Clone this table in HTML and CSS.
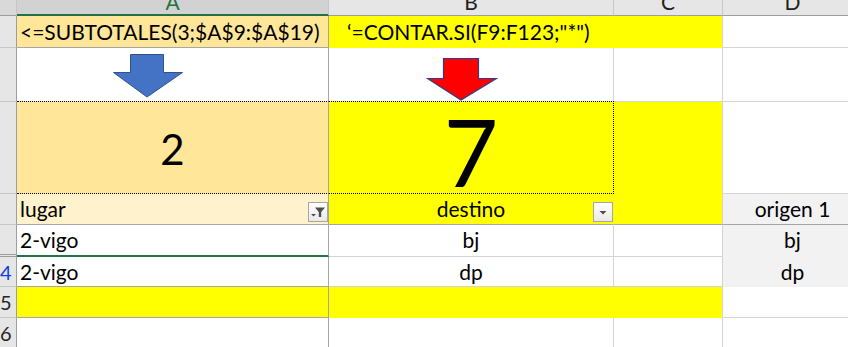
FILE: index.html
```html
<!DOCTYPE html>
<html lang="es">
<head>
    <meta charset="UTF-8">
    <meta name="viewport" content="width=device-width, initial-scale=1.0">
    <title>Hoja de cálculo - filtros</title>
    <link rel="stylesheet" href="styles.css">
</head>
<body>
    <div class="sheet">
        <!-- column headers -->
        <div class="hd corner"></div>
        <div class="hd col-sel">A</div>
        <div class="hd">B</div>
        <div class="hd">C</div>
        <div class="hd">D</div>

        <!-- formulas -->
        <div class="rh"></div>
        <div class="cell col-a peach formula">&lt;=SUBTOTALES(3;$A$9:$A$19)</div>
        <div class="cell yellow formula formula-b no-right">‘=CONTAR.SI(F9:F123;"*")</div>
        <div class="cell yellow"></div>
        <div class="cell"></div>

        <!-- arrows -->
        <div class="rh"></div>
        <div class="cell col-a arrow-cell">
            <svg class="arrow arrow-blue" width="72" height="44" viewBox="0 0 72 44">
                <polygon points="18.5,0.5 51.5,0.5 51.5,18.5 70.5,18.5 35,43 1.5,18.5 18.5,18.5" fill="#4472c4" stroke="#2f528f" stroke-width="1"/>
            </svg>
        </div>
        <div class="cell arrow-cell no-bottom">
            <svg class="arrow arrow-red" width="72" height="43" viewBox="0 0 72 43">
                <polygon points="17.5,0.5 52.5,0.5 52.5,20.5 70.5,20.5 35,42 1.5,20.5 17.5,20.5" fill="#ff0000" stroke="#2f3c8f" stroke-width="1.2"/>
            </svg>
        </div>
        <div class="cell"></div>
        <div class="cell"></div>

        <!-- result row -->
        <div class="rh"></div>
        <div class="cell col-a peach big ants">2</div>
        <div class="cell yellow huge ants ants-right">7</div>
        <div class="cell yellow no-bottom"></div>
        <div class="cell"></div>

        <!-- table header -->
        <div class="rh"></div>
        <div class="cell col-a cream head-cell">
            lugar
            <span class="filter-btn">
                <svg width="16" height="12" viewBox="0 0 16 12">
                    <polygon points="5,1.5 15,1.5 11.2,6 11.2,11 8.8,11 8.8,6" fill="#4d4d4d"/>
                    <polygon points="1,8 6,8 3.5,10.5" fill="#4d4d4d"/>
                </svg>
            </span>
        </div>
        <div class="cell yellow head-cell center no-right dark-bottom">
            destino
            <span class="filter-btn">
                <svg width="14" height="12" viewBox="0 0 14 12">
                    <polygon points="3.5,5 10.5,5 7,8.5" fill="#4d4d4d"/>
                </svg>
            </span>
        </div>
        <div class="cell yellow dark-bottom"></div>
        <div class="cell grey center dark-bottom">origen 1</div>

        <!-- data -->
        <div class="rh hidden-above"></div>
        <div class="cell col-a active-bottom">2-vigo</div>
        <div class="cell center">bj</div>
        <div class="cell"></div>
        <div class="cell grey center no-grid">bj</div>

        <div class="rh filtered">4</div>
        <div class="cell col-a">2-vigo</div>
        <div class="cell center">dp</div>
        <div class="cell"></div>
        <div class="cell grey center no-grid">dp</div>

        <div class="rh">5</div>
        <div class="cell col-a yellow"></div>
        <div class="cell yellow no-right"></div>
        <div class="cell yellow"></div>
        <div class="cell"></div>

        <div class="rh">6</div>
        <div class="cell col-a"></div>
        <div class="cell"></div>
        <div class="cell"></div>
        <div class="cell"></div>
    </div>
</body>
</html>
```

FILE: styles.css
```css
:root {
    --grid-line: #d4d4d4;
    --table-line: #a6a6a6;
    --header-bg: #e6e6e6;
    --header-sel: #d2d2d2;
    --excel-green: #217346;
    --peach: #ffe699;
    --cream: #fff2cc;
    --yellow: #ffff00;
    --grey: #f2f2f2;
}

html, body {
    margin: 0;
    padding: 0;
    overflow: hidden;
    background: white;
}

body {
    font-family: Lato, "Open Sans", sans-serif;
    color: #000;
}

.sheet {
    display: grid;
    grid-template-columns: 17px 312px 285px 109px 140px;
    grid-template-rows: 16px 32px 54px 92px 31px 32px 30px 31px 30px;
    width: 863px;
}

.sheet > div {
    box-sizing: border-box;
    border-right: 1px solid var(--grid-line);
    border-bottom: 1px solid var(--grid-line);
    overflow: hidden;
    white-space: nowrap;
}

/* column headers, letters cut by the scroll position */
.hd {
    background: var(--header-bg);
    border-right-color: #c6c6c6 !important;
    border-bottom-color: #9e9e9e !important;
    text-align: center;
    font-size: 21px;
    line-height: 4px;
    color: #1f1f1f;
}

.hd.corner {
    background: #d9d9d9;
}

.hd.col-sel {
    background: var(--header-sel);
    color: var(--excel-green);
    border-bottom: 2px solid var(--excel-green) !important;
}

/* row headers */
.rh {
    background: var(--header-bg);
    border-right-color: #9e9e9e !important;
    border-bottom-color: #c6c6c6 !important;
    text-align: right;
    padding-right: 9px;
    font-size: 20px;
    line-height: 30px;
    color: #262626;
}

.rh.filtered {
    color: #0b3fe0;
}

.rh.hidden-above {
    border-bottom: 3px double #9e9e9e !important;
}

.cell {
    font-size: 21px;
    line-height: 30px;
    padding-left: 3px;
    position: relative;
}

.center {
    text-align: center;
    padding-left: 0;
}

.col-a {
    border-right-color: var(--table-line) !important;
    border-bottom-color: var(--table-line) !important;
}

.peach { background: var(--peach); }
.cream { background: var(--cream); }
.yellow { background: var(--yellow); }
.grey { background: var(--grey); }

.no-right { border-right-color: transparent !important; }
.no-bottom { border-bottom-color: transparent !important; }
.no-grid { border-color: var(--grey) !important; }
.dark-bottom { border-bottom-color: var(--table-line) !important; }

.cell.yellow { border-bottom-color: var(--yellow); }
.cell.col-a.yellow { border-bottom-color: var(--table-line); }

.formula {
    font-size: 21px;
    line-height: 31px;
}

.formula-b {
    padding-left: 18px;
}

.arrow-cell {
    padding: 0;
}

.arrow {
    display: block;
}

.arrow-blue {
    margin: 6px 0 0 95px;
}

.arrow-red {
    margin: 10px 0 0 97px;
}

/* counters */
.big {
    text-align: center;
    padding: 0;
    font-size: 42px;
    line-height: 94px;
}

.huge {
    text-align: center;
    padding: 0;
    font-size: 94px;
    line-height: 98px;
}

/* copy marquee */
.ants {
    border-top: 1px dotted #000;
    border-bottom: 1px dotted #000 !important;
    margin-top: -1px;
}

.ants-right {
    border-right: 1px dotted #000 !important;
}

.head-cell {
    line-height: 30px;
}

.filter-btn {
    position: absolute;
    right: 0;
    top: 8px;
    width: 20px;
    height: 20px;
    box-sizing: border-box;
    border: 1px solid #a6a6a6;
    background: linear-gradient(#ffffff, #e9e9e9);
    display: flex;
    align-items: center;
    justify-content: center;
}

.active-bottom {
    border-bottom: 2px solid var(--excel-green) !important;
}
```
